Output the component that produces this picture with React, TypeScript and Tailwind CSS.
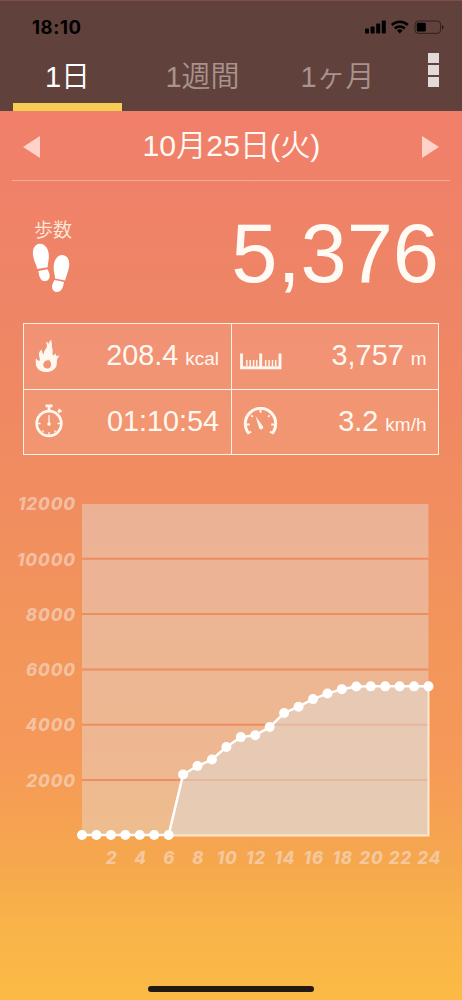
import React from 'react';

interface StatCellProps {
  icon: React.ReactNode;
  value: string;
  unit?: string;
}

const tabs = ['1日', '1週間', '1ヶ月'];

// cumulative steps, one entry per hour from 0 to 24
const hourlySteps = [
  0, 0, 0, 0, 0, 0, 0, 2190, 2495, 2730, 3180, 3540, 3605, 3905, 4410, 4640, 4915, 5115, 5275, 5370,
  5376, 5376, 5376, 5376, 5376,
];

const StatusIcons: React.FC = () => (
  <svg className="block" width="80" height="14" viewBox="0 0 80 14">
    <rect x="0" y="8.5" width="4" height="5" rx="0.8" />
    <rect x="5.6" y="6.5" width="4" height="7" rx="0.8" />
    <rect x="11.2" y="3.5" width="4" height="10" rx="0.8" />
    <rect x="16.8" y="0.5" width="4" height="13" rx="0.8" />
    <g fill="none" stroke="#000" strokeWidth="2.5">
      <path d="M26.8 5a11.4 11.4 0 0 1 16 0" />
      <path d="M29.8 8.5a7.2 7.2 0 0 1 10 0" />
    </g>
    <path d="M34.8 13.5l-2.8-2.9a4.2 4.2 0 0 1 5.6 0z" />
    <rect x="50" y="1" width="25.6" height="12.4" rx="3.4" fill="none" stroke="#000" strokeOpacity="0.5" />
    <rect x="51.8" y="2.8" width="9" height="8.8" rx="1.4" />
    <path d="M77 5v4.4q1.6-.6 1.6-2.2T77 5z" fillOpacity="0.6" />
  </svg>
);

const FootprintsIcon: React.FC = () => (
  <svg className="block" width="38" height="50" viewBox="0 0 37 50" preserveAspectRatio="none" fill="#fff">
    <path d="M7.3.8C2.6 1.3.2 6.4 1 12.3c.7 5.2 2.9 9 4.3 13.8l9.9-1.9c.1-4.2 1.5-7.7 1.2-12.4C16 5.4 12.2.3 7.3.8z" />
    <path d="M6.2 28l8.9-1.7c1.8 3.5 3.3 7.5.9 10.3-2.1 2.3-5.8 1.900-7.500-.7C6.900 33.600 6.700 30.800 6.200 28z" />
    <path d="M29.800 12.100c5 .5 7.200 5.600 6.300 11.500-.7 5-2.700 9-3.900 14l-9.800-2.200c-.1-4-1.600-7.500-1.300-12.100.5-6.700 4.200-11.600 8.700-11.200z" />
    <path d="M21.900 37l9.300 2c-.6 2.500-.9 5.400-2.600 7.700-1.900 2.500-5.400 3-7.600 1-2.700-2.700-1.200-7 .9-10.700z" />
  </svg>
);

const FlameIcon: React.FC = () => (
  <svg className="block" width="25" height="34" viewBox="0 0 25 34" fill="#fff8ee">
    <path
      fillRule="evenodd"
      d="M10.700 2.700c5 2.100 7.600 6 6.900 10.200-.2 1.500 0 2.500.5 3.700 1-.5 1.800-1.300 2.200-2.600l1 3 3.500-.5c-1.900 1.600-3.100 3.400-3 7.400.2 5.400-4.500 9.100-11.400 9.100C5 33 .8 29.300.8 24.300c0-1.900-.2-3.500.2-5 .9 1.500 1.900 2.300 3.500 2.700.8-2-.1-3.600-.5-5.500-.4-2.700.6-4.900 3-6-.2 2.400.4 3.900 2 4.700-.2-2.400.5-3.900 1.700-5.300 1.700-2.100 1.700-4.200 0-7.200zM14.500 21.300c-1.700-.3-3.700.1-5 1.400-1.600 1.700-1.700 4.300-.1 5.800 1.600 1.500 4.500 1.400 5.900-.2 1.500-1.900 1-4.300-.8-7z"
    />
    <path d="M16.300.8c-.2 2.200.8 3.300.7 5.600-.1 1-.2 1.500-.7 2.300-.5-1.500-1.300-2.100-1.900-3.200-.8-1.700-.1-3.500 1.900-4.700z" />
  </svg>
);

const StopwatchIcon: React.FC = () => (
  <svg className="block" width="29" height="34" viewBox="0 0 29 34" fill="none" stroke="#fff8ee">
    <circle cx="14" cy="19.5" r="12.3" strokeWidth="2.7" />
    <path d="M10.5 1.8h7M14 2v5M23.2 8.2l2.2-2.3" strokeWidth="2.8" />
    <path d="M23.7 5.1l2.9 2.8" strokeWidth="1.6" />
    <path d="M14 11v9" strokeWidth="1.3" />
    <circle cx="14" cy="20" r="1.8" fill="#fff8ee" stroke="none" />
    <path d="M14 28v3M3 19.5h2.5M22.5 19.5H25M8.5 26.5l-1 1.700M19.500 26.500l1 1.700" strokeWidth="1.3" />
  </svg>
);

const RulerIcon: React.FC = () => (
  <svg className="block" width="42" height="17" viewBox="0 0 42 17" fill="none" stroke="#fff8ee">
    <path d="M1.5.5v14.2h38.5V.5M20.7.5V14" strokeWidth="2.9" />
    <path d="M6.8 7v6M10.2 7v6M13.6 7v6M16.7 7v6M25.7 7v6M29.1 7v6M32.5 7v6M35.7 7v6" strokeWidth="1.5" />
  </svg>
);

const GaugeIcon: React.FC = () => (
  <svg className="block" width="35" height="29" viewBox="0 0 35 29" fill="none" stroke="#fff8ee">
    <path d="M6 26.5A15.2 15.2 0 1 1 29 26.5" strokeWidth="3" />
    <path d="M17.5 2.5v3.3M8.3 8.3l1.5 1.5M26.7 8.3l-1.5 1.5M3.5 17.5h3.3M31.5 17.5h-3.3M4.700 26.500l3.400-1.800M30.300 26.500l-3.400-1.800" strokeWidth="1.9" />
    <path d="M12.5 9l7.5 10.6c1.2 2.3-2.5 4-3.8 1.7z" fill="#fff8ee" stroke="none" />
  </svg>
);

const StatCell: React.FC<StatCellProps> = ({ icon, value, unit }) => (
  <div className="flex items-center justify-between border-r border-b border-[#fff1e6] pr-[11.5px] pb-px">
    {icon}
    <p className="flex items-baseline text-[28.8px] leading-none text-[#fff8f0]">
      <span>{value}</span>
      {unit && <span className="ml-[7px] text-[19px]">{unit}</span>}
    </p>
  </div>
);

const StepChart: React.FC = () => {
  const left = 82;
  const right = 428.5;
  const bottom = 345;
  const x = (hour: number) => left + (hour * (right - left)) / 24;
  const y = (steps: number) => bottom - (steps * 55.3) / 2000;
  const line = hourlySteps.map((steps, hour) => `${x(hour)},${y(steps)}`).join(' ');

  return (
    <svg className="block font-['Inter',sans-serif] font-extrabold italic" width="462" height="390" viewBox="0 0 462 390">
      <rect x={left} y="14" width={right - left} height={bottom - 14} fill="#e5dad0" fillOpacity="0.48" />
      {[2000, 4000, 6000, 8000, 10000].map((steps) => (
        <line key={steps} x1={left} x2={right} y1={y(steps) + 0.3} y2={y(steps) + 0.3} stroke="#ee824f" strokeOpacity="0.78" strokeWidth="2" />
      ))}
      <polygon points={`${line} ${right},${bottom}`} fill="#e2d8d0" fillOpacity="0.54" />
      <path d={`M${x(6)} ${bottom + 0.5}H${right}V${y(5376)}`} fill="none" stroke="#fff3df" strokeOpacity="0.85" strokeWidth="2" />
      <polyline points={line} fill="none" stroke="#fff" strokeWidth="2.5" />
      {hourlySteps.map((steps, hour) => (
        <circle key={hour} cx={x(hour)} cy={y(steps)} r="5" fill="#fff" />
      ))}
      <g fill="#f3dccb" fillOpacity="0.65" fontSize="17" letterSpacing="0.9">
        {[2000, 4000, 6000, 8000, 10000, 12000].map((steps) => (
          <text key={steps} x="76" y={y(steps) + 7} textAnchor="end">
            {steps}
          </text>
        ))}
        {[2, 4, 6, 8, 10, 12, 14, 16, 18, 20, 22, 24].map((hour) => (
          <text key={hour} x={x(hour) + 0.8} y="374" textAnchor="middle">
            {hour}
          </text>
        ))}
      </g>
    </svg>
  );
};

const App: React.FC = () => {
  return (
    <div className="flex h-[1000px] w-[462px] flex-col overflow-hidden bg-[linear-gradient(#f17f6a_0px,#f17f6a_111px,#ee8566_300px,#f18c60_490px,#f2965a_650px,#f59859_750px,#f6a74e_860px,#f9b34a_920px,#fbba45_1000px)] font-['Liberation_Sans','Noto_Sans_CJK_JP',sans-serif] font-[350]">
      <header className="flex h-[111px] shrink-0 flex-col border-t border-[#805047] bg-[#60413b]">
        <div className="flex h-[51px] items-center justify-between pr-[17px] pl-8">
          <span className="pt-[3px] font-['Inter',sans-serif] text-[18.5px] font-bold tracking-[0.6px] text-black">18:10</span>
          <StatusIcons />
        </div>
        <div className="flex flex-1 items-stretch pl-[13px]">
          {tabs.map((tab, i) => (
            <button
              key={tab}
              className={
                i === 0
                  ? 'mr-[13px] flex w-[109px] justify-center border-b-8 border-[#f6cd52] pt-[3px] text-[29px] leading-[44px] text-white'
                  : 'flex w-[135px] justify-center pt-[3px] text-[29px] leading-[44px] text-[#a8938e]'
              }
            >
              {tab}
            </button>
          ))}
          <div className="ml-[23px] flex flex-col gap-[2.5px] pt-[1px]">
            <span className="h-[9.5px] w-[11px] bg-[#e2dad8]" />
            <span className="h-[9.5px] w-[11px] bg-[#e2dad8]" />
            <span className="h-[9.5px] w-[11px] bg-[#e2dad8]" />
          </div>
        </div>
      </header>

      <div className="mx-3 flex h-[70px] shrink-0 items-center justify-between border-b border-[#f6aa98] px-[11px] pt-[2px]">
        <svg width="17" height="22" viewBox="0 0 17 22" fill="#ffd3ca">
          <path d="M0 11L17 0v22z" />
        </svg>
        <h1 className="pl-px text-[30.2px] leading-none font-[350] text-[#fffaf4]">10月25日(火)</h1>
        <svg width="17" height="22" viewBox="0 0 17 22" fill="#ffd3ca">
          <path d="M17 11L0 0v22z" />
        </svg>
      </div>

      <section className="flex h-[142px] shrink-0 justify-between pr-[23px] pl-8">
        <div className="pt-[38px]">
          <p className="pl-[2px] text-[19px] leading-[23px] text-[#ffe9dc]">歩数</p>
          <div className="pt-px">
            <FootprintsIcon />
          </div>
        </div>
        <p className="pt-[27px] text-[83px] leading-[92px] text-[#fffaf4]">5,376</p>
      </section>

      <section className="mx-[23px] grid h-[132px] shrink-0 grid-cols-2 grid-rows-2 border-t border-l border-[#fff1e6] bg-white/10">
        <StatCell icon={<div className="pl-[11px]"><FlameIcon /></div>} value="208.4" unit="kcal" />
        <StatCell icon={<div className="pt-3 pl-[8px]"><RulerIcon /></div>} value="3,757" unit="m" />
        <StatCell icon={<div className="pl-[11px]"><StopwatchIcon /></div>} value="01:10:54" />
        <StatCell icon={<div className="pl-[11px]"><GaugeIcon /></div>} value="3.2" unit="km/h" />
      </section>

      <section className="pt-[35px]">
        <StepChart />
      </section>

      <div className="mt-auto mb-2 h-[6px] w-[166px] shrink-0 self-center rounded-full bg-[#211a12]" />
    </div>
  );
};

export default App;
